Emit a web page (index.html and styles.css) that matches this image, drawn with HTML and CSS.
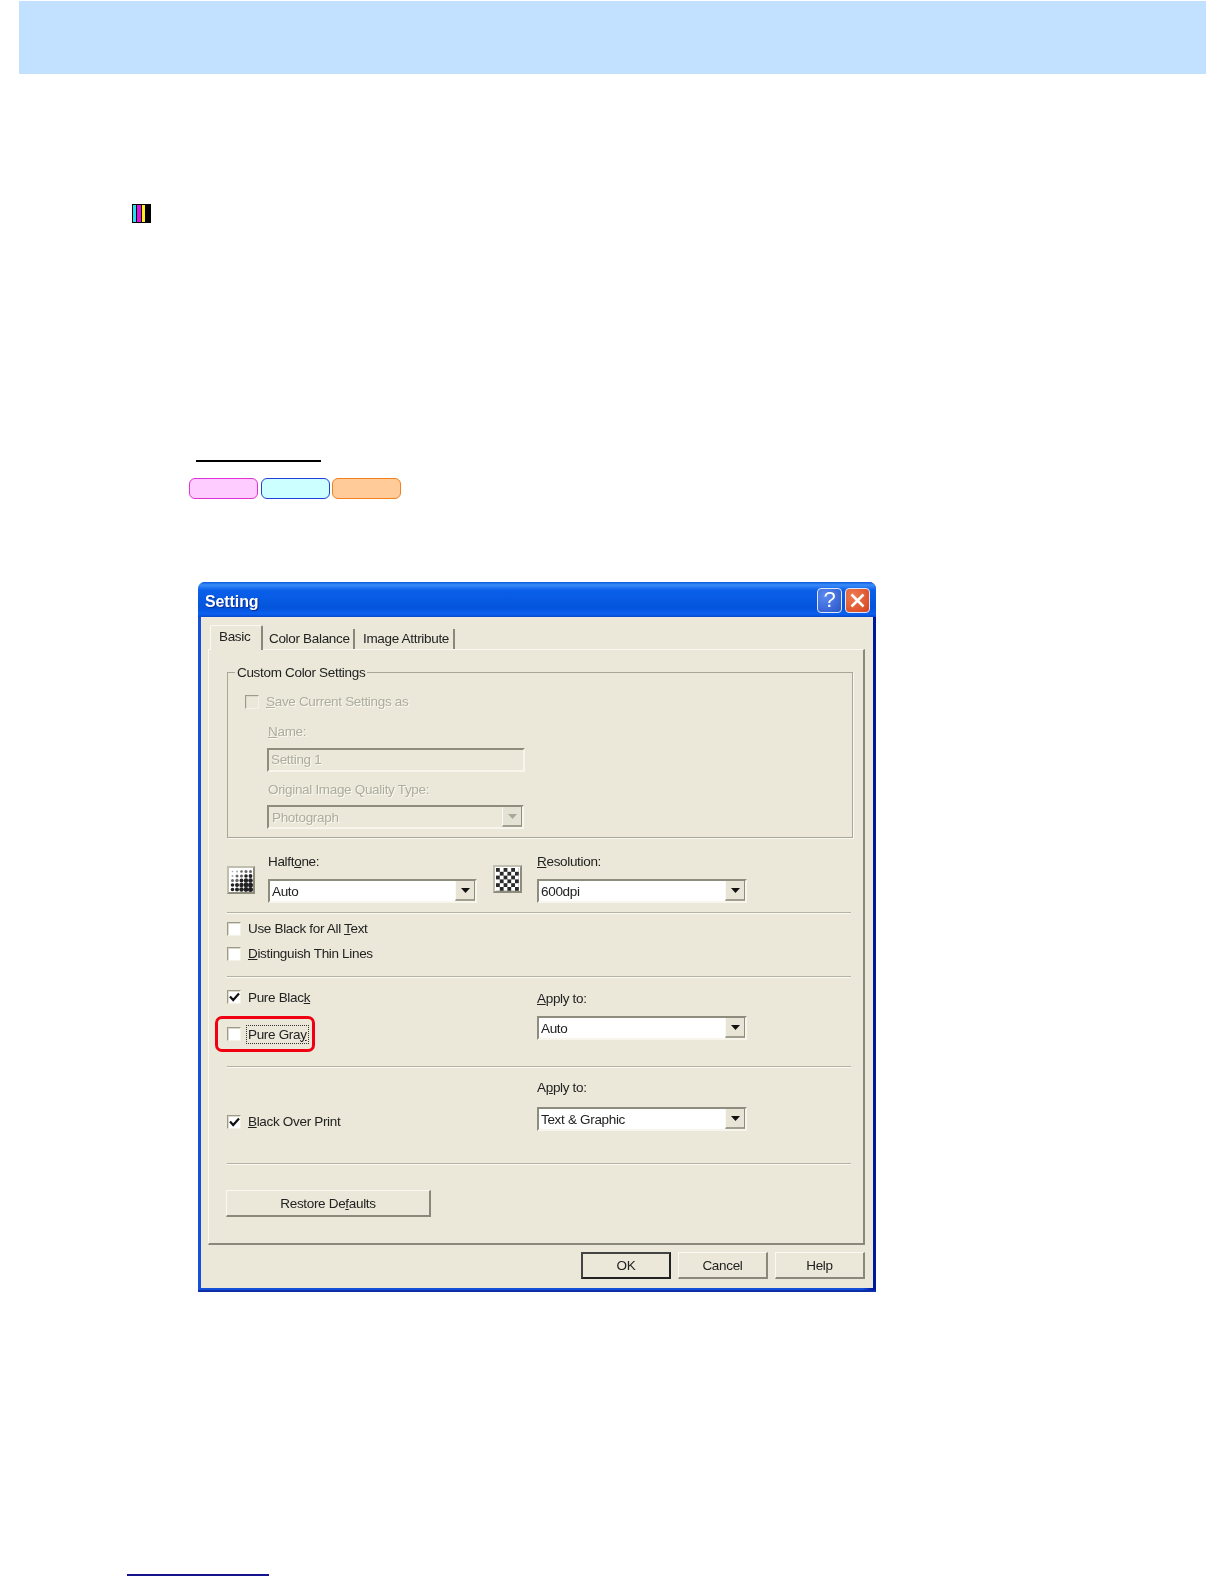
FILE: index.html
```html
<!DOCTYPE html>
<html lang="en">
<head>
<meta charset="utf-8">
<title>Setting</title>
<link rel="stylesheet" href="styles.css">
</head>
<body>
<div class="banner"></div>
<div class="cmyk"><i class="c"></i><i class="m"></i><i class="y"></i><i class="k"></i></div>
<div class="rule"></div>
<div class="pills"><span class="pill pink"></span><span class="pill aqua"></span><span class="pill peach"></span></div>

<div class="dialog">
  <div class="titlebar">
    <span class="title">Setting</span>
    <div class="winbtns">
      <span class="winbtn help">?</span>
      <span class="winbtn close"><svg width="17" height="17" viewBox="0 0 17 17"><path d="M2.5 2.5 14.5 14.5M14.5 2.5 2.5 14.5" stroke="#fff" stroke-width="2.6" fill="none"/></svg></span>
    </div>
  </div>
  <div class="client">
    <div class="tabs">
      <div class="tab active">Basic</div>
      <div class="tab first">Color Balance</div>
      <div class="tab second">Image Attribute</div>
    </div>
    <div class="panel">
      <div class="group">
        <span class="legend">Custom Color Settings</span>
        <div class="row save disabled"><span class="check off"></span><span class="lab"><u>S</u>ave Current Settings as</span></div>
        <div class="glabel name disabled"><u>N</u>ame:</div>
        <div class="field input">Setting 1</div>
        <div class="glabel orig disabled">Original Image Quality Type:</div>
        <div class="field gselect"><span class="val">Photograph</span><span class="arrow dim"><svg width="9" height="5" viewBox="0 0 9 5"><path d="M0 0h9L4.500 5z" fill="#aca899"/></svg></span></div>
      </div>

      <div class="quality">
        <span class="swatch">
          <svg width="23" height="23" viewBox="0 0 23 23">
            <g fill="#aaa"><circle cx="2.500" cy="2.500" r="0.800"/><circle cx="7" cy="2.500" r="1"/><circle cx="2.500" cy="7" r="1"/></g>
            <g fill="#666"><circle cx="11.500" cy="2.500" r="1.300"/><circle cx="16" cy="2.500" r="1.500"/><circle cx="20.500" cy="2.500" r="1.500"/><circle cx="7" cy="7" r="1.500"/><circle cx="11.500" cy="7" r="1.600"/><circle cx="2.500" cy="11.500" r="1.500"/><circle cx="7" cy="11.500" r="1.700"/></g>
            <g fill="#222"><circle cx="16" cy="7" r="1.800"/><circle cx="20.500" cy="7" r="1.900"/><circle cx="11.500" cy="11.500" r="1.900"/><circle cx="16" cy="11.500" r="2.200"/><circle cx="20.500" cy="11.500" r="2.300"/><circle cx="2.500" cy="16" r="1.800"/><circle cx="7" cy="16" r="2"/><circle cx="11.500" cy="16" r="2.200"/><circle cx="16" cy="16" r="2.400"/><circle cx="20.500" cy="16" r="2.500"/><circle cx="2.500" cy="20.500" r="1.800"/><circle cx="7" cy="20.500" r="2"/><circle cx="11.500" cy="20.500" r="2.200"/><circle cx="16" cy="20.500" r="2.400"/><circle cx="20.500" cy="20.500" r="2.500"/></g>
          </svg>
        </span>
        <div class="qcol">
          <div class="qlabel">Halft<u>o</u>ne:</div>
          <div class="field select wide"><span class="val">Auto</span><span class="arrow"><svg width="9" height="5" viewBox="0 0 9 5"><path d="M0 0h9L4.500 5z" fill="#111"/></svg></span></div>
        </div>
        <span class="swatch res">
          <svg width="23" height="23" viewBox="0 0 23 23">
            <defs><pattern id="chk" width="7.600" height="7.600" patternUnits="userSpaceOnUse"><rect width="3.800" height="3.800" fill="#2a2a2a"/><rect x="3.800" y="3.800" width="3.800" height="3.800" fill="#2a2a2a"/></pattern></defs>
            <rect width="23" height="23" fill="url(#chk)"/>
          </svg>
        </span>
        <div class="qcol">
          <div class="qlabel"><u>R</u>esolution:</div>
          <div class="field select"><span class="val">600dpi</span><span class="arrow"><svg width="9" height="5" viewBox="0 0 9 5"><path d="M0 0h9L4.500 5z" fill="#111"/></svg></span></div>
        </div>
      </div>

      <div class="sep s1"></div>
      <div class="row r1"><span class="check"></span><span class="lab">Use Black for All <u>T</u>ext</span></div>
      <div class="row r2"><span class="check"></span><span class="lab"><u>D</u>istinguish Thin Lines</span></div>
      <div class="sep s2"></div>

      <div class="split pure">
        <div class="left">
          <div class="row"><span class="check"><svg width="11" height="10" viewBox="0 0 11 10"><path d="M1 4.500 4.200 8 10 1.500" stroke="#111" stroke-width="2.200" fill="none"/></svg></span><span class="lab">Pure Blac<u>k</u></span></div>
          <div class="row gray"><span class="check"></span><span class="lab focus">Pure Gra<u>y</u></span><span class="redbox"></span></div>
        </div>
        <div class="right">
          <div class="qlabel"><u>A</u>pply to:</div>
          <div class="field select"><span class="val">Auto</span><span class="arrow"><svg width="9" height="5" viewBox="0 0 9 5"><path d="M0 0h9L4.500 5z" fill="#111"/></svg></span></div>
        </div>
      </div>
      <div class="sep s3"></div>

      <div class="split over">
        <div class="left">
          <div class="row"><span class="check"><svg width="11" height="10" viewBox="0 0 11 10"><path d="M1 4.500 4.200 8 10 1.500" stroke="#111" stroke-width="2.200" fill="none"/></svg></span><span class="lab"><u>B</u>lack Over Print</span></div>
        </div>
        <div class="right flush">
          <div class="qlabel">A<u>p</u>ply to:</div>
          <div class="field select"><span class="val">Text &amp; Graphic</span><span class="arrow"><svg width="9" height="5" viewBox="0 0 9 5"><path d="M0 0h9L4.500 5z" fill="#111"/></svg></span></div>
        </div>
      </div>
      <div class="sep s4"></div>
      <div class="btn restore">Restore De<u>f</u>aults</div>
    </div>
    <div class="actions">
      <div class="btn default">OK</div>
      <div class="btn">Cancel</div>
      <div class="btn">Help</div>
    </div>
  </div>
</div>
<div class="footrule"></div>
</body>
</html>
```
FILE: styles.css
```css
* { box-sizing: border-box; }
html, body { margin: 0; padding: 0; background: #fff; }
body { width: 1224px; height: 1584px; overflow: hidden; font-family: "Liberation Sans", Arial, sans-serif; font-size: 13.5px; letter-spacing: -0.32px; color: #222; }

.banner { margin: 1px 18px 0 19px; height: 73px; background: #c2e0ff; }
.cmyk { display: flex; width: 19px; height: 19px; margin: 130px 0 0 132px; padding: 1px; gap: 1px; background: #000; }
.cmyk i { display: block; height: 100%; }
.cmyk .c { width: 3px; background: #22e0ee; }
.cmyk .m { width: 4px; background: #e010e0; }
.cmyk .y { width: 3px; background: #ffee22; }
.rule { width: 125px; height: 2px; margin: 237px 0 0 196px; background: #000; }
.pills { display: flex; gap: 3px; margin: 16px 0 0 189px; }
.pill { display: block; width: 69px; height: 21px; border-radius: 6px; border: 1px solid; }
.pink { background: #ffccff; border-color: #e030d8; }
.aqua { background: #ccffff; border-color: #2040d8; margin-right: -1px; }
.peach { background: #ffcc99; border-color: #f08020; }

.dialog { width: 678px; height: 710px; margin: 83px 0 0 198px; padding: 0 3px 4px; border-radius: 7px 7px 0 0; background: linear-gradient(90deg, #1450d8 0, #1450d8 98%, #0018a0 99.5%); box-shadow: inset 0 -2px 0 #0a2fa8; display: flex; flex-direction: column; filter: blur(0.3px); }
.titlebar { flex: none; height: 35px; margin: 0 -3px; padding: 0 6px 0 7px; border-radius: 7px 7px 0 0; display: flex; align-items: center; justify-content: space-between; background: linear-gradient(180deg, #0a5ae0 0, #3c8cf8 3px, #0a60ea 8px, #0454dc 26px, #0a60f0 32px, #0648c8 35px); }
.title { font-size: 16px; font-weight: bold; letter-spacing: -0.1px; color: #fff; text-shadow: 1px 1px 1px #0a2a90; margin-top: 5px; }
.winbtns { display: flex; gap: 3px; margin-top: 1px; }
.winbtn { width: 25px; height: 25px; border: 1px solid #dfe8fb; border-radius: 4px; display: flex; align-items: center; justify-content: center; color: #fff; font-size: 22px; line-height: 1; }
.help { background: radial-gradient(circle at 30% 30%, #5a8af0, #2a55c8); }
.close { background: radial-gradient(circle at 30% 30%, #f07a50, #d4451f); }

.client { flex: 1; background: #ebe8d9; display: flex; flex-direction: column; }
.tabs { display: flex; align-items: flex-end; height: 24px; margin: 8px 0 0 9px; position: relative; z-index: 1; }
.tab { height: 20px; line-height: 20px; white-space: nowrap; }
.tab.active { width: 53px; height: 25px; line-height: 22px; margin-bottom: -1px; padding-left: 8px; background: #ebe8d9; border-top: 1px solid #fbfaf2; border-left: 1px solid #fbfaf2; border-right: 2px solid #8a887a; border-radius: 2px 2px 0 0; }
.tab.first { width: 92px; padding-left: 6px; border-right: 2px solid #8a887a; }
.tab.second { width: 100px; padding-left: 8px; border-right: 2px solid #8a887a; }

.panel { flex: none; width: 657px; height: 596px; margin-left: 7px; padding: 22px 0 0 18px; border: 1px solid #fbfaf2; border-right: 2px solid #8a887a; border-bottom: 2px solid #8a887a; }

.group { position: relative; width: 626px; height: 166px; border: 1px solid #a8a698; box-shadow: 1px 1px 0 #fbfaf2; }
.legend { position: absolute; left: 7px; top: -8px; height: 16px; line-height: 16px; padding: 0 2px; background: #ebe8d9; }
.disabled { color: #aeac9c; text-shadow: 1px 1px 0 #fbfaf2; }

.row { display: flex; align-items: center; height: 16px; position: relative; }
.row .lab { margin-left: 7px; white-space: nowrap; }
.r1 .lab, .r2 .lab, .over .lab, .save .lab { padding-bottom: 2px; }
.save { margin: 21px 0 0 17px; }
.glabel { height: 16px; line-height: 16px; margin-left: 40px; }
.name { margin-top: 14px; }
.orig { margin-top: 10px; }

.check { flex: none; width: 14px; height: 14px; background: #fff; border: 1px solid; border-color: #9c9a8a #f4f2e6 #f4f2e6 #9c9a8a; box-shadow: inset 1px 1px 0 #dcd9ca; display: flex; align-items: center; justify-content: center; }
.check.off { background: #ebe8d9; }

.field { display: flex; align-items: center; border: 2px solid; border-color: #8e8c7c #f8f6ec #f8f6ec #8e8c7c; height: 24px; width: 210px; }
.val { flex: 1; padding-left: 2px; white-space: nowrap; }
.input { width: 258px; margin: 8px 0 0 39px; padding: 0 0 2px 2px; background: #ebe8d9; color: #aeac9c; text-shadow: 1px 1px 0 #fbfaf2; }
.gselect { width: 257px; margin: 7px 0 0 39px; background: #ebe8d9; color: #aeac9c; text-shadow: 1px 1px 0 #fbfaf2; }
.gselect .val { padding-left: 3px; }
.select { background: #fff; }
.select.wide { width: 209px; }
.arrow { flex: none; width: 20px; height: 20px; background: #e8e5d6; border-right: 1px solid #8e8c7c; border-bottom: 2px solid #a09e8f; border-left: 1px solid #fbfaf2; display: flex; align-items: center; justify-content: center; }
.arrow.dim { background: #e4e2d4; }

.quality { display: flex; margin-top: 16px; }
.swatch { flex: none; width: 28px; height: 28px; margin: 12px 13px 0 0; background: #fff; border: 2px solid; border-color: #c0beaf #8e8c7c #8e8c7c #c0beaf; display: flex; align-items: center; justify-content: center; }
.swatch.res { margin: 11px 15px 0 16px; width: 29px; }
.qlabel { height: 16px; line-height: 16px; white-space: nowrap; }
.qcol .field { margin-top: 9px; }

.sep { width: 624px; height: 2px; background: #b4b2a4; border-bottom: 1px solid #fbfaf2; }
.s1 { margin-top: 9px; }
.r1 { margin-top: 7px; }
.r2 { margin-top: 9px; }
.s2 { margin-top: 14px; }
.s3 { margin-top: 24px; }
.s4 { margin-top: 32px; }

.split { display: flex; margin-top: 11px; }
.split.over { margin-top: 12px; }
.left { flex: none; width: 310px; }
.right { padding-top: 2px; }
.right.flush { padding-top: 0; }
.right .field { margin-top: 9px; }
.over .left { padding-top: 34px; }
.over .right .field { margin-top: 11px; }
.gray { margin-top: 21px; }
.focus { outline: 1px dotted #333; outline-offset: 1px; }
.redbox { position: absolute; left: -12px; top: -10px; width: 100px; height: 36px; border: 3px solid #f00010; border-radius: 7px; pointer-events: none; }

.btn { width: 90px; height: 27px; display: flex; align-items: center; justify-content: center; background: #ebe8d9; border: 1px solid; border-color: #fbfaf2 #8a887a #8a887a #fbfaf2; border-bottom-width: 2px; border-right-width: 2px; white-space: nowrap; }
.restore { width: 205px; margin: 25px 0 0 -1px; }
.default { border: 2px solid #222; border-color: #444 #222 #222 #444; }
.actions { display: flex; justify-content: flex-end; gap: 7px; margin: 7px 8px 0 0; }

.footrule { width: 142px; height: 2px; margin: 282px 0 0 127px; background: #141490; }
```
